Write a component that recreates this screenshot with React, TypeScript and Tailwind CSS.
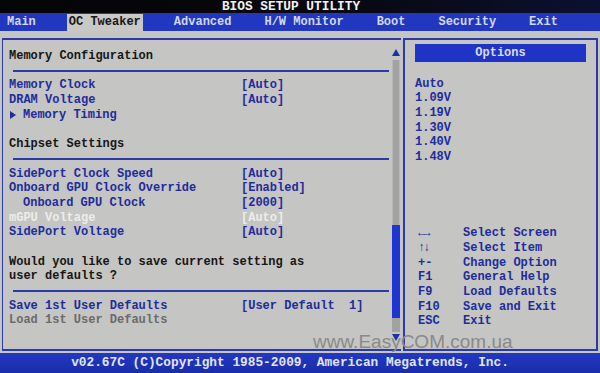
import React from "react"

const blue = "text-[#1e2c9c]"

function Rule() {
    return (
        <div className="h-[14.7px] flex items-center pl-[4px] pr-[2px]">
            <div className="h-[2px] w-full bg-[#2b3aa6]" />
        </div>
    )
}

function Item({ label, value, className = blue, indent = false }: { label: string; value?: string; className?: string; indent?: boolean }) {
    return (
        <div className={`h-[14.7px] leading-[14.7px] flex ${className}`}>
            <span className={`w-[232px] whitespace-pre ${indent ? "pl-[14px]" : ""}`}>{label}</span>
            {value && <span className="whitespace-pre">{value}</span>}
        </div>
    )
}

const tabs = ["Main", "OC Tweaker", "Advanced", "H/W Monitor", "Boot", "Security", "Exit"]
const options = ["Auto", "1.09V", "1.19V", "1.30V", "1.40V", "1.48V"]
const help = [
    ["\u2190\u2192", "Select Screen"],
    ["\u2191\u2193", "Select Item"],
    ["+-", "Change Option"],
    ["F1", "General Help"],
    ["F9", "Load Defaults"],
    ["F10", "Save and Exit"],
    ["ESC", "Exit"],
]

export default function App() {
    return (
        <div className="relative w-[600px] h-[373px] overflow-hidden flex flex-col bg-[#c5c5c3] font-['Liberation_Mono',monospace] font-bold text-[12px]">
            {/* title */}
            <div className="h-[13px] bg-gradient-to-r from-[#050508] via-[#07070c] to-[#0c1030] text-[#f2f2f2] text-[12.8px] leading-[13px] text-center pr-[18px]">
                BIOS SETUP UTILITY
            </div>

            {/* menu */}
            <div className="h-[18px] bg-[#2237bf] flex items-center gap-[33px] pl-[7px] text-[#d3d7ee] leading-[18px]">
                {tabs.map(t =>
                    t === "OC Tweaker" ? (
                        <span key={t} className="bg-[#c8c8c6] text-[#161616] -mx-[2px] px-[2px] h-[17px] mt-[1px] leading-[17px]">{t}</span>
                    ) : (
                        <span key={t}>{t}</span>
                    )
                )}
            </div>

            {/* body */}
            <div className="flex-1 flex gap-[2px] px-[2px] pt-[7px] pb-[2px]">
                <div className="w-[399px] flex border-l border-t-2 border-b-2 border-[#2b3aa6]">
                    <div className="flex-1 pt-[9px] pl-[6px]">
                        <Item label="Memory Configuration" className="text-[#161616]" />
                        <Rule />
                        <Item label="Memory Clock" value="[Auto]" />
                        <Item label="DRAM Voltage" value="[Auto]" />
                        <div className={`h-[14.7px] leading-[14.7px] flex items-center ${blue}`}>
                            <svg width="14" height="8" viewBox="0 0 14 8" className="shrink-0">
                                <path d="M1 0 L7 4 L1 8 Z" fill="#1e2c9c" />
                            </svg>
                            <span>Memory Timing</span>
                        </div>
                        <div className="h-[14.7px]" />
                        <Item label="Chipset Settings" className="text-[#161616]" />
                        <Rule />
                        <Item label="SidePort Clock Speed" value="[Auto]" />
                        <Item label="Onboard GPU Clock Override" value="[Enabled]" />
                        <Item label="Onboard GPU Clock" value="[2000]" indent />
                        <Item label="mGPU Voltage" value="[Auto]" className="text-[#ededeb]" />
                        <Item label="SidePort Voltage" value="[Auto]" />
                        <div className="h-[14.7px]" />
                        <Item label="Would you like to save current setting as" className="text-[#161616]" />
                        <Item label="user defaults ?" className="text-[#161616]" />
                        <Rule />
                        <Item label="Save 1st User Defaults" value="[User Default  1]" />
                        <Item label="Load 1st User Defaults" className="text-[#6b6b6b]" />
                    </div>

                    {/* scrollbar */}
                    <div className="w-[9px] mr-[1px] flex flex-col items-center pt-[9px] pb-[8px]">
                        <svg width="8" height="7" viewBox="0 0 8 7">
                            <path d="M4 0 L8 7 L0 7 Z" fill="#1f2fa8" />
                        </svg>
                        <div className="mt-[4px] flex-1 w-[8px] flex flex-col">
                            <div className="flex-1 bg-[#a2a2a0] border-x border-[#b8b8b6]" />
                            <div className="h-[93px] bg-[#1d36d2]" />
                            <div className="h-[14px] bg-[#a2a2a0]" />
                        </div>
                        <svg width="8" height="7" viewBox="0 0 8 7" className="mt-[2px]">
                            <path d="M0 0 L8 0 L4 7 Z" fill="#1f2fa8" />
                        </svg>
                    </div>
                </div>

                <div className="flex-1 border-2 border-[#2b3aa6] px-[10px] pt-[4px]">
                    <div className="h-[18px] bg-[#1f34c6] text-[#d8dcf2] leading-[18px] text-center">
                        Options
                    </div>
                    <div className={`mt-[14.5px] ${blue}`}>
                        {options.map(o => (
                            <div key={o} className="h-[14.7px] leading-[14.7px]">{o}</div>
                        ))}
                    </div>
                    <div className={`mt-[61.5px] pl-[3px] ${blue}`}>
                        {help.map(([k, d], i) => (
                            <div key={d} className="h-[14.7px] leading-[14.7px] flex">
                                <span className={i < 2 ? "w-[45px] tracking-[-2px]" : "w-[45px]"}>{k}</span>
                                <span>{d}</span>
                            </div>
                        ))}
                    </div>
                </div>
            </div>

            {/* footer */}
            <div className="h-[20px] bg-gradient-to-b from-[#2238c4] to-[#1a2da8] text-[#e2e6f6] text-[12.8px] leading-[20px] text-center pr-[20px]">
                v02.67C (C)Copyright 1985-2009, American Megatrends, Inc.
            </div>

            {/* watermark */}
            <div className="absolute left-[313px] top-[332px] text-[19px] leading-[19px] font-normal text-[#8a8a8a] font-['Liberation_Sans',Arial,sans-serif]">
                www.EasyCOM.com.ua
            </div>
        </div>
    )
}
